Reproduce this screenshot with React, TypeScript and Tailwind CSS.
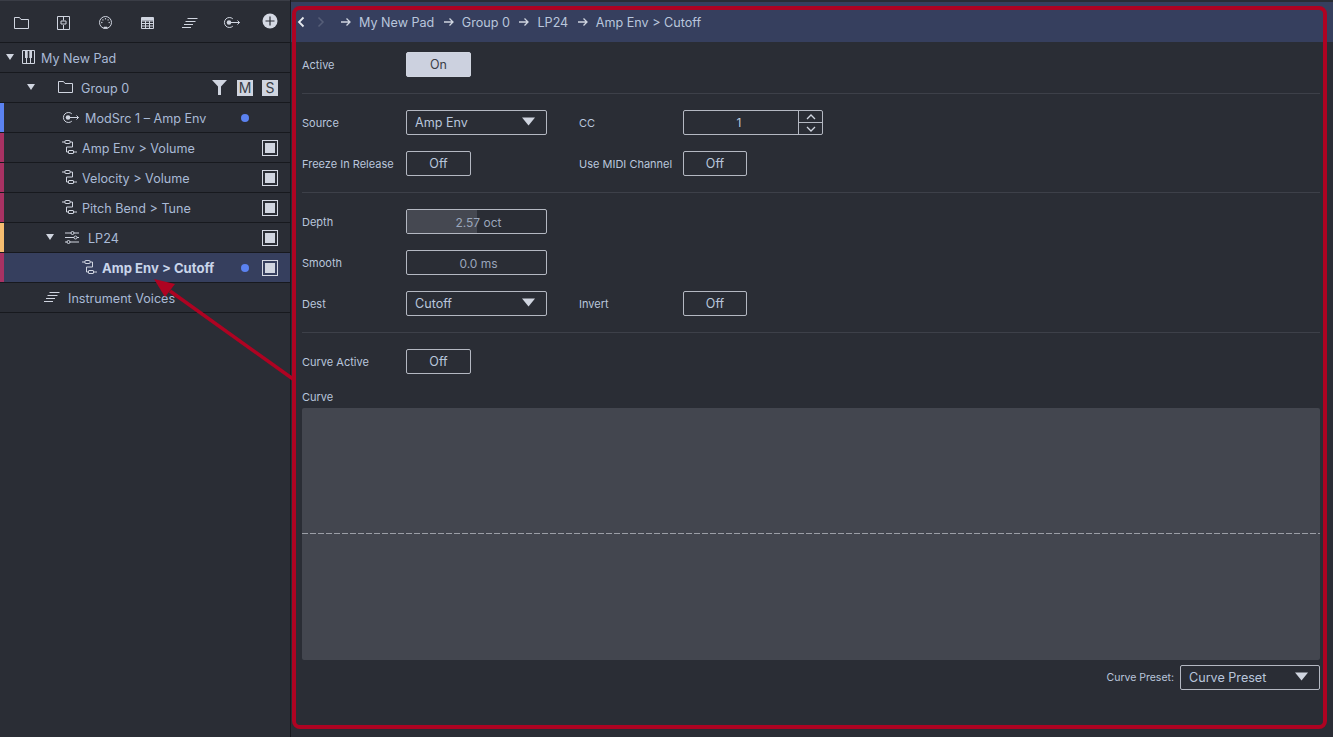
import type { ReactNode } from "react";

const stroke = {
  fill: "none",
  stroke: "#d0d5e0",
  strokeWidth: 1,
} as const;

function Caret() {
  return (
    <svg width="8" height="6" viewBox="0 0 8 6" className="shrink-0">
      <path d="M0 0h8L4 6z" fill="#d0d5e0" />
    </svg>
  );
}

function FolderIcon({ size = 15 }: { size?: number }) {
  return (
    <svg width={size} height={(size * 12) / 15} viewBox="0 0 15 12">
      <path d="M.5 11.5V.5h5l1.500 2h7.500v9z" {...stroke} />
    </svg>
  );
}

function MixerIcon() {
  return (
    <svg width="13" height="14" viewBox="0 0 13 14">
      <path d="M.5.500h12v13H.5zM6.500.5v4M6.500 9v4.500M4 5h5v3H4z" {...stroke} />
    </svg>
  );
}

function MidiIcon() {
  return (
    <svg width="13" height="13" viewBox="0 0 13 13">
      <circle cx="6.500" cy="6.500" r="6" {...stroke} />
      <path d="M4.200 12.500h4.600L8 10.800H5z" fill="#d0d5e0" />
      <g fill="#d0d5e0">
        <circle cx="2.800" cy="6.500" r=".7" />
        <circle cx="3.900" cy="3.900" r=".7" />
        <circle cx="6.500" cy="2.800" r=".7" />
        <circle cx="9.100" cy="3.900" r=".7" />
        <circle cx="10.200" cy="6.500" r=".7" />
      </g>
    </svg>
  );
}

function TableIcon() {
  return (
    <svg width="13" height="12" viewBox="0 0 13 12">
      <path d="M.5.500h12v11H.5zM.5 4h12M.5 6.500h12M.5 9h12M4.500 4v7.500M8.500 4v7.500" {...stroke} />
      <path d="M.5 1h12v2.500H.5z" fill="#d0d5e0" />
    </svg>
  );
}

function VoicesIcon() {
  return (
    <svg width="16" height="10" viewBox="0 0 16 10">
      <path d="M5.500.5h10M3.500 3.500h10M2 6.500h9M0 9.500h9" {...stroke} />
    </svg>
  );
}

function ModSrcIcon() {
  return (
    <svg width="17" height="11" viewBox="0 0 17 11">
      <path d="M9.800 1.800a5 5 0 1 0 0 7.400" {...stroke} />
      <circle cx="6" cy="5.500" r="2.300" fill="#d0d5e0" />
      <path d="M8 5.500h8.500M14.500 3.500l2 2-2 2" {...stroke} />
    </svg>
  );
}

function RoutingIcon() {
  return (
    <svg width="15" height="14" viewBox="0 0 15 14">
      <path d="M0 2h3M8 2h2.500V7H4.500V12H6.500M11.500 12H15" {...stroke} />
      <rect x="3" y=".5" width="5" height="3" rx=".5" {...stroke} />
      <rect x="6.500" y="10.500" width="5" height="3" rx=".5" {...stroke} />
    </svg>
  );
}

function SlidersIcon() {
  return (
    <svg width="14" height="13" viewBox="0 0 14 13">
      <path d="M0 2h6M9 2h5M0 6.500h9M12 6.500h2M0 11h2M5 11h9" {...stroke} />
      <circle cx="7.500" cy="2" r="1.500" {...stroke} />
      <circle cx="10.500" cy="6.500" r="1.500" {...stroke} />
      <circle cx="3.500" cy="11" r="1.500" {...stroke} />
    </svg>
  );
}

function PianoIcon() {
  return (
    <svg width="13" height="14" viewBox="0 0 13 14">
      <path d="M.5.500h12v13H.5zM4.500 8v5.500M8.500 8v5.500" {...stroke} />
      <path d="M3 .5h2.700v7.500H3zM7.300.5H10v7.500H7.300z" fill="#d0d5e0" />
    </svg>
  );
}

function FunnelIcon() {
  return (
    <svg width="15" height="15" viewBox="0 0 15 15">
      <path d="M0 0h15L9 6.500V15H6V6.500z" fill="#d0d5e0" />
    </svg>
  );
}

function Arrow() {
  return (
    <svg width="10" height="10" viewBox="0 0 10 10" className="shrink-0">
      <path d="M0 5h8.500M5.500 1.500L9 5 5.500 8.500" fill="none" stroke="#d0d5e0" strokeWidth="1.300" />
    </svg>
  );
}

function BypassBox() {
  return (
    <div className="flex h-4 w-4 items-center justify-center border border-[#d5d9e4]">
      <div className="h-[10px] w-[10px] bg-[#d0d5e0]" />
    </div>
  );
}

function Row({
  children,
  bar,
  selected,
  pad,
  right,
}: {
  children: ReactNode;
  bar?: string;
  selected?: boolean;
  pad: string;
  right?: ReactNode;
}) {
  return (
    <div className={`flex h-[30px] items-center border-b border-[#17191e] ${selected ? "bg-[#363f5e]" : ""}`}>
      <div className={`h-full w-1 shrink-0 ${bar ?? ""}`} />
      <div className={`flex min-w-0 flex-1 items-center ${pad}`}>{children}</div>
      {right}
    </div>
  );
}

function Dot() {
  return <div className="h-2 w-2 rounded-full bg-[#5b82f0]" />;
}

function Sidebar() {
  return (
    <div className="flex h-full w-[291px] shrink-0 flex-col border-r border-[#17191e] text-[12.6px] text-[#a9bad6]">
      <div className="flex h-[43px] items-center border-y border-t-[#3a3d46] border-b-[#17191e] pl-[14px] pt-[2px]">
        <div className="flex w-[43px]"><FolderIcon /></div>
        <div className="flex w-[42px]"><MixerIcon /></div>
        <div className="flex w-[42px]"><MidiIcon /></div>
        <div className="flex w-[41px]"><TableIcon /></div>
        <div className="flex w-[41px]"><VoicesIcon /></div>
        <div className="flex w-[39px]"><ModSrcIcon /></div>
        <svg width="16" height="16" viewBox="0 0 16 16" className="-mt-[4px]">
          <circle cx="8" cy="8" r="7.500" fill="#d5d9e4" />
          <path d="M8 3.500v9M3.500 8h9" stroke="#2a2d35" strokeWidth="1.200" />
        </svg>
      </div>
      <Row pad="pl-[2px]">
        <Caret />
        <span className="ml-2"><PianoIcon /></span>
        <span className="ml-[6px] pt-[3px]">My New Pad</span>
      </Row>
      <Row
        pad="pl-[23px]"
        right={
          <div className="flex items-center pr-3">
            <FunnelIcon />
            <div className="ml-[10px] flex h-4 w-4 items-center justify-center bg-[#d0d5e0] text-sm text-[#3a3d46]">M</div>
            <div className="ml-[9px] flex h-4 w-4 items-center justify-center bg-[#d0d5e0] text-sm text-[#3a3d46]">S</div>
          </div>
        }
      >
        <Caret />
        <span className="ml-[23px]"><FolderIcon /></span>
        <span className="ml-2 pt-[3px]">Group 0</span>
      </Row>
      <Row
        bar="bg-[#5b82f0]"
        pad="pl-[58px] gap-[6px]"
        right={<div className="pr-[41px]"><Dot /></div>}
      >
        <ModSrcIcon />
        <span className="pt-[3px]">ModSrc 1 – Amp Env</span>
      </Row>
      <Row bar="bg-[#a83263]" pad="pl-[58px] gap-[5px]" right={<div className="pr-3"><BypassBox /></div>}>
        <RoutingIcon />
        <span className="pt-[3px]">Amp Env &gt; Volume</span>
      </Row>
      <Row bar="bg-[#a83263]" pad="pl-[58px] gap-[5px]" right={<div className="pr-3"><BypassBox /></div>}>
        <RoutingIcon />
        <span className="pt-[3px]">Velocity &gt; Volume</span>
      </Row>
      <Row bar="bg-[#a83263]" pad="pl-[58px] gap-[5px]" right={<div className="pr-3"><BypassBox /></div>}>
        <RoutingIcon />
        <span className="pt-[3px]">Pitch Bend &gt; Tune</span>
      </Row>
      <Row bar="bg-[#f5bd70]" pad="pl-[42px]" right={<div className="pr-3"><BypassBox /></div>}>
        <Caret />
        <span className="ml-[11px]"><SlidersIcon /></span>
        <span className="ml-[9px] pt-[3px]">LP24</span>
      </Row>
      <Row
        bar="bg-[#a83263]"
        selected
        pad="pl-[78px] gap-[5px]"
        right={
          <div className="flex items-center gap-[13px] pr-3">
            <Dot />
            <BypassBox />
          </div>
        }
      >
        <RoutingIcon />
        <span className="pt-[2px] text-[13.1px] font-bold text-[#c9d5ea]">Amp Env &gt; Cutoff</span>
      </Row>
      <Row pad="pl-[40px] gap-2">
        <VoicesIcon />
        <span className="pt-[3px]">Instrument Voices</span>
      </Row>
    </div>
  );
}

function Label({ children, className = "w-[104px]" }: { children: ReactNode; className?: string }) {
  return <div className={`shrink-0 pt-px text-[11px] text-[#b9c6dc] ${className}`}>{children}</div>;
}

function Toggle({ children, on, className = "w-[65px]" }: { children: ReactNode; on?: boolean; className?: string }) {
  return (
    <div
      className={`flex h-[25px] shrink-0 items-center justify-center rounded-[2px] border pt-[2px] text-[12.5px] ${className} ${
        on ? "border-[#d0d5e0] bg-[#ccd1df] text-[#3a3d46]" : "border-[#b4b8c2] text-[#b9c6dc]"
      }`}
    >
      {children}
    </div>
  );
}

function Select({ children, className = "w-[141px]" }: { children: ReactNode; className?: string }) {
  return (
    <div className={`flex h-[25px] shrink-0 items-center justify-between rounded-[2px] border border-[#b4b8c2] pl-2 pr-[11px] text-[12.6px] text-[#b9c6dc] ${className}`}>
      <span className="pt-[2px]">{children}</span>
      <svg width="13" height="9" viewBox="0 0 13 9" className="-mt-[2px]">
        <path d="M0 .5h13L6.500 8.500z" fill="#d0d5e0" />
      </svg>
    </div>
  );
}

function Field({ children, fill }: { children: ReactNode; fill?: boolean }) {
  return (
    <div className="relative flex h-[25px] w-[141px] shrink-0 items-center justify-center overflow-hidden rounded-[2px] border border-[#b4b8c2] pl-1 pt-[2px] text-xs text-[#9aa6bb]">
      {fill && <div className="absolute inset-y-0 left-0 w-[50%] bg-[#454851]" />}
      <span className="relative">{children}</span>
    </div>
  );
}

function Spinner() {
  return (
    <div className="flex h-[25px] w-[140px] items-stretch rounded-[2px] border border-[#b4b8c2] text-xs text-[#b9c6dc]">
      <div className="flex flex-1 items-center justify-center pr-1">1</div>
      <div className="flex w-6 flex-col border-l border-[#b4b8c2]">
        <div className="flex flex-1 items-center justify-center border-b border-[#b4b8c2]">
          <svg width="10" height="6" viewBox="0 0 10 6">
            <path d="M1 5l4-4 4 4" fill="none" stroke="#d0d5e0" strokeWidth="1.300" />
          </svg>
        </div>
        <div className="flex flex-1 items-center justify-center">
          <svg width="10" height="6" viewBox="0 0 10 6">
            <path d="M1 1l4 4 4-4" fill="none" stroke="#d0d5e0" strokeWidth="1.300" />
          </svg>
        </div>
      </div>
    </div>
  );
}

function FormRow({ children, className = "" }: { children: ReactNode; className?: string }) {
  return <div className={`flex h-[25px] items-center ${className}`}>{children}</div>;
}

function Divider({ className }: { className: string }) {
  return <div className={`h-px bg-[#3d4049] ${className}`} />;
}

function Crumb({ children }: { children: ReactNode }) {
  return (
    <>
      <Arrow />
      <span className="ml-2 mr-[9.5px] pt-[2px]">{children}</span>
    </>
  );
}

function Main() {
  return (
    <div className="flex h-full min-w-0 flex-1 flex-col">
      <div className="flex h-[42px] shrink-0 items-center border-t-2 border-[#2a2d35] bg-[#363f5e] pl-[6px] text-[12.6px] text-[#b9c6dc]">
        <svg width="8" height="12" viewBox="0 0 8 12">
          <path d="M6.500 1.500L2 6l4.500 4.500" fill="none" stroke="#e5e8ef" strokeWidth="1.800" />
        </svg>
        <svg width="8" height="12" viewBox="0 0 8 12" className="ml-[12px]">
          <path d="M1.500 1.500L6 6l-4.500 4.500" fill="none" stroke="#565e78" strokeWidth="1.500" />
        </svg>
        <div className="ml-4 flex items-center">
          <Crumb>My New Pad</Crumb>
          <Crumb>Group 0</Crumb>
          <Crumb>LP24</Crumb>
          <Crumb>Amp Env &gt; Cutoff</Crumb>
        </div>
      </div>
      <div className="flex min-h-0 flex-1 flex-col pl-[11px] pr-[13px]">
        <FormRow className="mt-[10px]">
          <Label>Active</Label>
          <Toggle on>On</Toggle>
        </FormRow>
        <Divider className="mt-4" />
        <FormRow className="mt-4">
          <Label>Source</Label>
          <Select>Amp Env</Select>
          <Label className="ml-8 w-[104px]">CC</Label>
          <Spinner />
        </FormRow>
        <FormRow className="mt-4">
          <Label>Freeze In Release</Label>
          <Toggle>Off</Toggle>
          <div className="w-[76px] shrink-0" />
          <Label className="ml-8 w-[104px]">Use MIDI Channel</Label>
          <Toggle className="w-16">Off</Toggle>
        </FormRow>
        <Divider className="mt-4" />
        <FormRow className="mt-4">
          <Label>Depth</Label>
          <Field fill>2.57 oct</Field>
        </FormRow>
        <FormRow className="mt-4">
          <Label>Smooth</Label>
          <Field>0.0 ms</Field>
        </FormRow>
        <FormRow className="mt-4">
          <Label>Dest</Label>
          <Select>Cutoff</Select>
          <Label className="ml-8 w-[104px]">Invert</Label>
          <Toggle className="w-16">Off</Toggle>
        </FormRow>
        <Divider className="mt-4" />
        <FormRow className="mt-4">
          <Label>Curve Active</Label>
          <Toggle>Off</Toggle>
        </FormRow>
        <div className="mt-[15px] flex h-4 items-center text-[11px] text-[#b9c6dc]">Curve</div>
        <div className="mt-[3px] flex h-[252px] flex-col justify-center rounded-[2px] bg-[#43464f] pb-px">
          <div className="h-px bg-[repeating-linear-gradient(90deg,#9b9ea6_0,#9b9ea6_6.5px,transparent_6.5px,transparent_8px)]" />
        </div>
        <div className="mt-[5px] flex items-center justify-end gap-[6px]">
          <span className="text-[10.5px] text-[#b9c6dc]">Curve Preset:</span>
          <Select className="w-[140px]">Curve Preset</Select>
        </div>
      </div>
    </div>
  );
}

export default function App() {
  return (
    <div className="relative flex h-[737px] w-[1333px] overflow-hidden bg-[#2a2d35] font-['Inter',sans-serif]">
      <Sidebar />
      <Main />
      {/* red callout drawn over the screenshot */}
      <svg width="1333" height="737" viewBox="0 0 1333 737" className="pointer-events-none absolute left-0 top-0">
        <rect x="294" y="8" width="1031" height="719" rx="6" fill="none" stroke="#ae0322" strokeWidth="4" />
        <path d="M293 379L170 291" stroke="#ae0322" strokeWidth="3.500" fill="none" />
        <path d="M154 279l21 5-10 13z" fill="#ae0322" />
      </svg>
    </div>
  );
}
